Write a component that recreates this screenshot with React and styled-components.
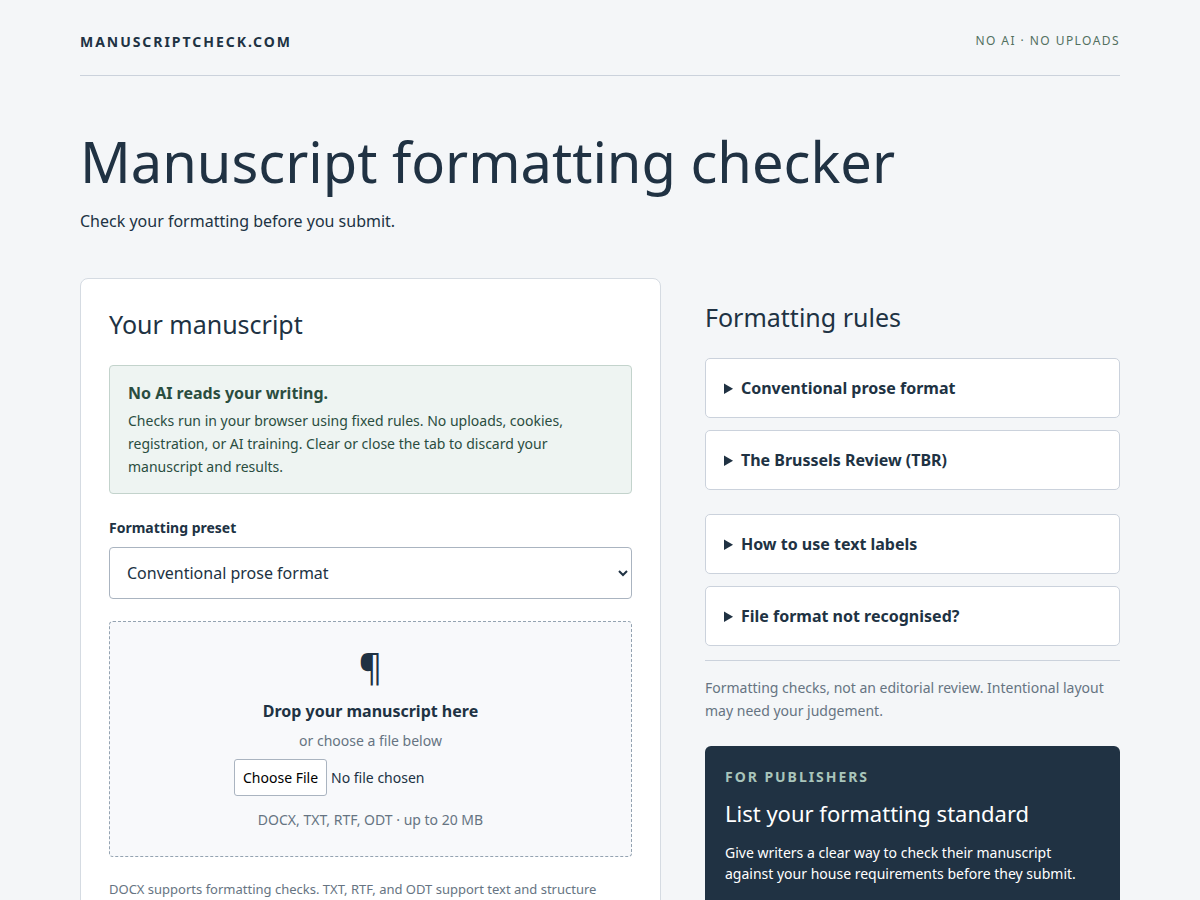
import React from 'react';
import styled, { createGlobalStyle } from 'styled-components';

const GlobalStyle = createGlobalStyle`
  *, *::before, *::after { box-sizing: border-box; }
  body {
    margin: 0;
    background: #f4f6f8;
    color: #203243;
    font-family: "Noto Sans", sans-serif;
    font-size: 16px;
    line-height: 26px;
  }
  h1, h2, p { margin: 0; font-weight: 400; }
`;

const Page = styled.div`
  max-width: 1120px;
  margin: 0 auto;
  padding: 0 40px 60px;
`;

const Header = styled.header`
  display: flex;
  justify-content: space-between;
  align-items: flex-start;
  padding: 31px 0 22px;
  border-bottom: 1px solid #cbd2dc;
`;

const Wordmark = styled.a`
  color: inherit;
  text-decoration: none;
  font-size: 14px;
  line-height: 22px;
  font-weight: 700;
  letter-spacing: 0.14em;
`;

const Tagline = styled.span`
  color: #52705f;
  font-size: 12px;
  line-height: 19px;
  letter-spacing: 0.12em;
`;

const Intro = styled.section`
  padding: 56px 0 44px;
`;

const Title = styled.h1`
  font-size: 56px;
  line-height: 58px;
`;

const Lead = styled.p`
  margin-top: 18px;
`;

const Columns = styled.main`
  display: grid;
  grid-template-columns: 7fr 5fr;
  align-items: start;
  gap: 44px;
`;

const Card = styled.section`
  padding: 28px;
  background: #fff;
  border: 1px solid #d5dbe2;
  border-radius: 8px;
`;

const SectionTitle = styled.h2`
  font-size: 25px;
  line-height: 34px;
`;

const Notice = styled.div`
  margin-top: 24px;
  padding: 14px 18px 15px;
  background: #eef4f2;
  border: 1px solid #c3d3cc;
  border-radius: 4px;
  color: #2a4d3f;
`;

const NoticeText = styled.p`
  margin-top: 3px;
  font-size: 14px;
  line-height: 23px;
`;

const Label = styled.label`
  display: block;
  margin: 23px 0 8px;
  font-size: 14px;
  line-height: 22px;
  font-weight: 700;
`;

const Select = styled.select`
  display: block;
  width: 100%;
  height: 52px;
  padding: 0 13px;
  background: #fff;
  border: 1px solid #aab4c0;
  border-radius: 4px;
  color: inherit;
  font: inherit;
`;

const DropZone = styled.div`
  display: flex;
  flex-direction: column;
  align-items: center;
  margin-top: 22px;
  padding: 26px 20px 25px;
  background: #f8f9fb;
  border: 1px dashed #94a3b1;
  border-radius: 4px;
  text-align: center;
`;

const Pilcrow = styled.span`
  font-size: 36px;
  line-height: 38px;
`;

const DropTitle = styled.label`
  margin-top: 12px;
  font-weight: 700;
`;

const Muted = styled.p`
  color: #667482;
  font-size: ${({ $small }) => ($small ? 13 : 14)}px;
  line-height: 22px;
  margin-top: ${({ $gap }) => $gap || 0}px;
`;

const FileInput = styled.input`
  width: 273px;
  max-width: 100%;
  margin-top: 7px;
  color: inherit;
  font: inherit;
  font-size: 14px;
  line-height: normal;

  &::file-selector-button {
    padding: 8px;
    background: #fff;
    border: 1px solid #aab4c0;
    border-radius: 3px;
    color: #000;
    font: inherit;
  }
`;

const Sidebar = styled.aside`
  padding-top: 22px;
`;

const RuleGroup = styled.div`
  display: grid;
  gap: 12px;
  margin-top: 24px;
`;

const Rule = styled.details`
  padding: 16px 18px;
  background: #fff;
  border: 1px solid #cbd2dc;
  border-radius: 5px;

  summary {
    font-weight: 700;
    cursor: pointer;
  }
`;

const Disclaimer = styled.p`
  margin-top: 14px;
  padding-top: 15px;
  border-top: 1px solid #cbd2dc;
  color: #667482;
  font-size: 14px;
  line-height: 23px;
`;

const Publishers = styled.section`
  margin-top: 24px;
  padding: 20px 20px 40px;
  background: #203243;
  border-radius: 6px;
  color: #fff;
`;

const Eyebrow = styled.p`
  color: #a9c5bb;
  font-size: 14px;
  line-height: 22px;
  font-weight: 700;
  letter-spacing: 0.14em;
`;

const PanelTitle = styled.h2`
  margin-top: 10px;
  font-size: 22px;
  line-height: 30px;
`;

const PanelText = styled.p`
  margin-top: 14px;
  font-size: 14px;
  line-height: 21px;
`;

const ruleGroups = [
  ['Conventional prose format', 'The Brussels Review (TBR)'],
  ['How to use text labels', 'File format not recognised?'],
];

export default function App() {
  return (
    <>
      <GlobalStyle />
      <Page>
        <Header>
          <Wordmark href="/">MANUSCRIPTCHECK.COM</Wordmark>
          <Tagline>NO AI · NO UPLOADS</Tagline>
        </Header>
        <Intro>
          <Title>Manuscript formatting checker</Title>
          <Lead>Check your formatting before you submit.</Lead>
        </Intro>
        <Columns>
          <Card>
            <SectionTitle>Your manuscript</SectionTitle>
            <Notice>
              <strong>No AI reads your writing.</strong>
              <NoticeText>
                Checks run in your browser using fixed rules. No uploads, cookies, registration, or
                AI training. Clear or close the tab to discard your manuscript and results.
              </NoticeText>
            </Notice>
            <Label htmlFor="preset">Formatting preset</Label>
            <Select id="preset">
              <option>Conventional prose format</option>
              <option>The Brussels Review (TBR)</option>
            </Select>
            <DropZone>
              <Pilcrow aria-hidden="true">¶</Pilcrow>
              <DropTitle htmlFor="manuscript">Drop your manuscript here</DropTitle>
              <Muted $gap={6}>or choose a file below</Muted>
              <FileInput id="manuscript" type="file" accept=".docx,.txt,.rtf,.odt" />
              <Muted $gap={13}>DOCX, TXT, RTF, ODT · up to 20 MB</Muted>
            </DropZone>
            <Muted $small $gap={21}>
              DOCX supports formatting checks. TXT, RTF, and ODT support text and structure
            </Muted>
          </Card>
          <Sidebar>
            <SectionTitle>Formatting rules</SectionTitle>
            {ruleGroups.map((rules) => (
              <RuleGroup key={rules[0]}>
                {rules.map((rule) => (
                  <Rule key={rule}>
                    <summary>{rule}</summary>
                  </Rule>
                ))}
              </RuleGroup>
            ))}
            <Disclaimer>
              Formatting checks, not an editorial review. Intentional layout may need your
              judgement.
            </Disclaimer>
            <Publishers>
              <Eyebrow>FOR PUBLISHERS</Eyebrow>
              <PanelTitle>List your formatting standard</PanelTitle>
              <PanelText>
                Give writers a clear way to check their manuscript against your house requirements
                before they submit.
              </PanelText>
            </Publishers>
          </Sidebar>
        </Columns>
      </Page>
    </>
  );
}
